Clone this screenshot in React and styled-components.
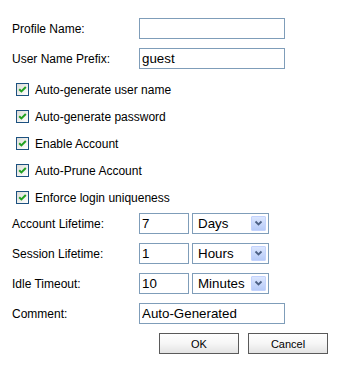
import React, { useState } from 'react';
import styled, { createGlobalStyle } from 'styled-components';

const GlobalStyle = createGlobalStyle`
  body {
    margin: 0;
    background: #fff;
    font-family: "Liberation Sans", Arial, sans-serif;
    font-size: 12px;
    color: #000;
  }
`;

const Form = styled.div`
  width: 349px;
  height: 368px;
  box-sizing: border-box;
  padding: 18px 0 0 12px;
  display: flex;
  flex-direction: column;
`;

const FieldGroup = styled.div`
  display: flex;
  flex-direction: column;
  gap: 9px;
  margin-top: ${(p) => p.top || 0}px;
`;

const FieldRow = styled.div`
  display: flex;
  align-items: center;
  height: 21px;
`;

const Label = styled.span`
  width: 127px;
  flex-shrink: 0;
`;

const TextInput = styled.input`
  box-sizing: border-box;
  width: ${(p) => p.w || 146}px;
  height: 21px;
  margin: 0;
  padding: 0 2px;
  border: 1px solid #7f9db9;
  font-family: "Liberation Sans", Arial, sans-serif;
  font-size: 13.33px;
  color: #000;
  outline: none;
`;

const SelectBox = styled.div`
  position: relative;
  width: 77px;
  height: 21px;
  margin-left: 3px;
`;

const Select = styled.select`
  appearance: none;
  box-sizing: border-box;
  width: 100%;
  height: 100%;
  margin: 0;
  padding: 0 0 0 5px;
  border: 1px solid #7f9db9;
  background: #fff;
  font-family: "Liberation Sans", Arial, sans-serif;
  font-size: 13.33px;
  color: #000;
  outline: none;
`;

const Arrow = styled.span`
  position: absolute;
  top: 3px;
  right: 3px;
  width: 15px;
  height: 15px;
  box-sizing: border-box;
  border: 1px solid #c3d3fd;
  border-radius: 1px;
  background: linear-gradient(#dbe6fe, #b7cbf8);
  display: flex;
  align-items: center;
  justify-content: center;
  pointer-events: none;
`;

const CheckGroup = styled.div`
  display: flex;
  flex-direction: column;
  margin-top: 7px;
`;

const CheckRow = styled.label`
  display: flex;
  align-items: center;
  height: 27px;
  padding-left: 4px;
  cursor: pointer;
`;

const Box = styled.span`
  box-sizing: border-box;
  width: 13px;
  height: 13px;
  margin-right: 6px;
  border: 1px solid #1c5180;
  background: linear-gradient(135deg, #dcdcd7, #fff);
  display: flex;
  align-items: center;
  justify-content: center;
`;

const ButtonRow = styled.div`
  display: flex;
  gap: 9px;
  margin: 9px 0 0 147px;
`;

const Button = styled.button`
  box-sizing: border-box;
  width: 80px;
  height: 21px;
  padding: 0;
  border: 1px solid #5a5a5a;
  background: linear-gradient(#fff 0%, #f6f6f6 50%, #e3e3e3 100%);
  font-family: "Liberation Sans", Arial, sans-serif;
  font-size: 11px;
  color: #000;
  cursor: pointer;
`;

function Checkbox({ label, checked, onToggle }) {
  return (
    <CheckRow onClick={onToggle}>
      <Box>
        {checked && (
          <svg width="9" height="9" viewBox="0 0 9 9">
            <path d="M1.2 4.2 L3.4 6.4 L7.8 2" fill="none" stroke="#21a121" strokeWidth="2" />
          </svg>
        )}
      </Box>
      {label}
    </CheckRow>
  );
}

function Dropdown({ value, options }) {
  return (
    <SelectBox>
      <Select defaultValue={value}>
        {options.map((o) => (
          <option key={o}>{o}</option>
        ))}
      </Select>
      <Arrow>
        <svg width="9" height="7" viewBox="0 0 9 7">
          <path d="M1.5 1.5 L4.5 4.5 L7.5 1.5" fill="none" stroke="#4d6185" strokeWidth="1.8" />
        </svg>
      </Arrow>
    </SelectBox>
  );
}

const units = ['Minutes', 'Hours', 'Days'];

export default function App() {
  const [checks, setChecks] = useState({
    user: true,
    pass: true,
    enable: true,
    prune: true,
    unique: true,
  });

  const toggle = (k) => setChecks({ ...checks, [k]: !checks[k] });

  return (
    <>
      <GlobalStyle />
      <Form>
        <FieldGroup>
          <FieldRow>
            <Label>Profile Name:</Label>
            <TextInput defaultValue="" />
          </FieldRow>
          <FieldRow>
            <Label>User Name Prefix:</Label>
            <TextInput defaultValue="guest" />
          </FieldRow>
        </FieldGroup>

        <CheckGroup>
          <Checkbox label="Auto-generate user name" checked={checks.user} onToggle={() => toggle('user')} />
          <Checkbox label="Auto-generate password" checked={checks.pass} onToggle={() => toggle('pass')} />
          <Checkbox label="Enable Account" checked={checks.enable} onToggle={() => toggle('enable')} />
          <Checkbox label="Auto-Prune Account" checked={checks.prune} onToggle={() => toggle('prune')} />
          <Checkbox label="Enforce login uniqueness" checked={checks.unique} onToggle={() => toggle('unique')} />
        </CheckGroup>

        <FieldGroup top={2}>
          <FieldRow>
            <Label>Account Lifetime:</Label>
            <TextInput w={50} defaultValue="7" />
            <Dropdown value="Days" options={units} />
          </FieldRow>
          <FieldRow>
            <Label>Session Lifetime:</Label>
            <TextInput w={50} defaultValue="1" />
            <Dropdown value="Hours" options={units} />
          </FieldRow>
          <FieldRow>
            <Label>Idle Timeout:</Label>
            <TextInput w={50} defaultValue="10" />
            <Dropdown value="Minutes" options={units} />
          </FieldRow>
          <FieldRow>
            <Label>Comment:</Label>
            <TextInput defaultValue="Auto-Generated" />
          </FieldRow>
        </FieldGroup>

        <ButtonRow>
          <Button>OK</Button>
          <Button>Cancel</Button>
        </ButtonRow>
      </Form>
    </>
  );
}
